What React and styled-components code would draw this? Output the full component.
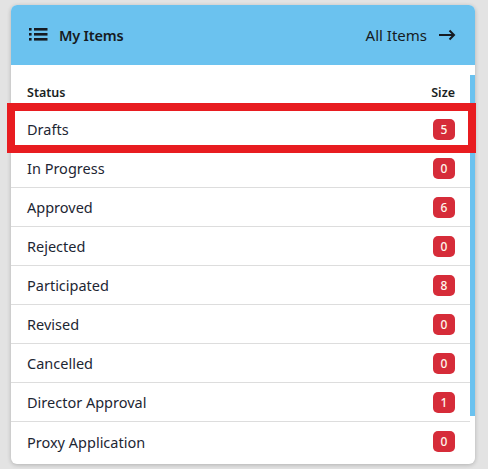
import React from "react";
import styled, { createGlobalStyle } from "styled-components";

const GlobalStyle = createGlobalStyle`
  html, body { margin: 0; padding: 0; background: #e3e3e3; }
  body { font-family: "Noto Sans", "Open Sans", Arial, sans-serif; }
  * { box-sizing: border-box; }
`;

const Page = styled.div`
  position: relative;
  width: 488px;
  height: 469px;
  padding: 5px 13px 5px 11px;
`;

const Card = styled.section`
  width: 464px;
  height: 459px;
  background: #ffffff;
  border-radius: 6px;
  overflow: hidden;
  box-shadow: 0 1px 4px rgba(0, 0, 0, 0.22);
  display: flex;
  flex-direction: column;
`;

const Header = styled.header`
  height: 60px;
  flex: none;
  background: #6bc2ef;
  display: flex;
  align-items: center;
  justify-content: space-between;
  padding: 0 19px 1px 18px;
  color: #161b22;
`;

const Title = styled.div`
  display: flex;
  align-items: center;
  gap: 11px;
  font-size: 14.5px;
  font-weight: 600;
  letter-spacing: -0.2px;
`;

const AllLink = styled.a`
  display: flex;
  align-items: center;
  gap: 12px;
  font-size: 15px;
  color: #161b22;
  text-decoration: none;
`;

const Body = styled.div`
  position: relative;
  flex: 1;
  overflow: hidden;
  padding-right: 5px;
`;

const ScrollThumb = styled.div`
  position: absolute;
  right: 0;
  top: 10px;
  width: 5px;
  height: 341px;
  background: #6bc2ef;
`;

const HeadRow = styled.div`
  height: 45px;
  display: flex;
  align-items: flex-end;
  justify-content: space-between;
  padding: 0 15px 8px 16px;
  font-size: 12.5px;
  font-weight: 600;
  color: #1b1f24;
  border-bottom: 1px solid #dddddd;
`;

const Row = styled.div`
  height: 39px;
  display: flex;
  align-items: center;
  justify-content: space-between;
  padding: 0 15px 0 16px;
  font-size: 14.5px;
  color: #1d2633;
  border-bottom: ${(p) => (p.$last ? "none" : "1px solid #dddddd")};
`;

const Badge = styled.span`
  min-width: 22px;
  height: 21px;
  border-radius: 5px;
  background: #d62c39;
  color: #fff8ee;
  font-size: 12px;
  font-weight: 500;
  display: inline-flex;
  align-items: center;
  justify-content: center;
`;

const Highlight = styled.div`
  position: absolute;
  left: 7px;
  top: 103px;
  width: 469px;
  height: 50px;
  border: 8px solid #e81c20;
  pointer-events: none;
`;

const ListIcon = () => (
  <svg width="19" height="13" viewBox="0 0 19 13" fill="#161b22">
    <rect x="0" y="0" width="2.6" height="2.6" />
    <rect x="5" y="0" width="13.5" height="2.6" />
    <rect x="0" y="5" width="2.6" height="2.6" />
    <rect x="5" y="5" width="13.5" height="2.6" />
    <rect x="0" y="10" width="2.6" height="2.6" />
    <rect x="5" y="10" width="13.5" height="2.6" />
  </svg>
);

const ArrowIcon = () => (
  <svg width="17" height="12" viewBox="0 0 17 12" fill="none" stroke="#161b22" strokeWidth="2">
    <line x1="0" y1="6" x2="15" y2="6" />
    <polyline points="10.5,1.5 15,6 10.5,10.5" strokeLinejoin="miter" />
  </svg>
);

const rows = [
  ["Drafts", 5],
  ["In Progress", 0],
  ["Approved", 6],
  ["Rejected", 0],
  ["Participated", 8],
  ["Revised", 0],
  ["Cancelled", 0],
  ["Director Approval", 1],
  ["Proxy Application", 0],
];

export default function App() {
  return (
    <>
      <GlobalStyle />
      <Page>
        <Card>
          <Header>
            <Title>
              <ListIcon />
              My Items
            </Title>
            <AllLink href="#">
              All Items
              <ArrowIcon />
            </AllLink>
          </Header>
          <Body>
            <HeadRow>
              <span>Status</span>
              <span>Size</span>
            </HeadRow>
            {rows.map(([label, n], i) => (
              <Row key={label} $last={i === rows.length - 1}>
                <span>{label}</span>
                <Badge>{n}</Badge>
              </Row>
            ))}
            <ScrollThumb />
          </Body>
        </Card>
        <Highlight />
      </Page>
    </>
  );
}
